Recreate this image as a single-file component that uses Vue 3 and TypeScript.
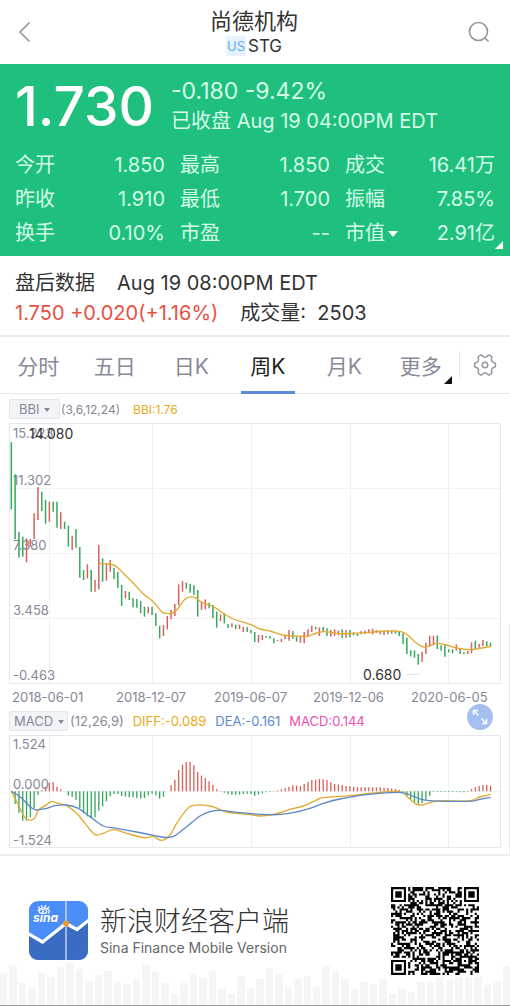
<script setup lang="ts">
import { ref } from 'vue'

interface Stat { label: string; value: string; menu?: boolean }
const stats: Stat[] = [
  { label: '今开', value: '1.850' },
  { label: '最高', value: '1.850' },
  { label: '成交', value: '16.41万' },
  { label: '昨收', value: '1.910' },
  { label: '最低', value: '1.700' },
  { label: '振幅', value: '7.85%' },
  { label: '换手', value: '0.10%' },
  { label: '市盈', value: '--' },
  { label: '市值', value: '2.91亿', menu: true },
]

const tabs = ['分时', '五日', '日K', '周K', '月K', '更多']
const active = ref('周K')

// Weekly ranges: direction, high, low (thirds of a pixel below the chart card's top)
type Candle = [string, number, number]
const weeks = `g142-343 g238-432 g410-488 g425-485 r430-502 r432-455 r355-432 r276-375 g290-348 g315-386
r320-380 g320-350 g320-398 r352-402 g380-402 g392-455 r422-465 g402-458 g456-548 g525-555
r508-550 g525-590 r555-590 r450-583 g490-560 r507-557 r495-530 g518-553 g530-578 g570-633
r588-610 g590-615 g610-637 g612-638 g618-655 g635-665 r635-655 g635-660 g655-693 g692-730
r690-723 r663-703 r645-673 r627-663 r568-630 r558-590 g563-581 g567-593 g571-600 g585-665
r620-645 r613-643 g623-640 g630-670 g650-698 r658-678 g655-685 g687-699 r685-697 g689-702
r689-702 r695-711 g696-711 g705-715 g711-741 r720-743 r720-735 g723-728 g723-731 g730-745
r735-738 r731-741 r721-733 r705-737 g709-731 g725-740 r722-743 r711-745 r703-725 r692-711
g695-703 r697-723 g695-710 g700-723 r705-725 r703-723 r707-721 g703-729 r705-728 g705-727
g712-721 g715-723 r708-718 r707-717 r703-715 r701-718 r705-713 r707-718 r708-720 g707-718
r707-716 g707-716 g710-723 g715-747 g728-777 g766-784 g766-788 g777-809 r770-801 r743-777
r722-755 r722-751 g721-762 g751-767 g751-785 g763-772 g763-775 r748-767 g762-777 g772-778
r768-777 r742-775 g737-763 r747-758 r735-753 g739-753 g743-755`
const candles: Candle[] = weeks.split(/\s+/).map((w) => {
  const [hi, lo] = w.slice(1).split('-').map(Number)
  return [w[0], hi, lo]
})
const macd = [
  0, -38, -65, -88, -88, -78, -50, -10, 4, 14, 26, 28, 14, 6, 0, -13, -17, -26, -50, -66, -75, -78, -78, -58, -45,
  -30, -15, -8, -8, -14, -16, -18, -18, -20, -22, -20, -12, -8, -12, -22, -16, 0, 18, 35, 64, 80, 88, 88, 78, 58,
  47, 40, 30, 20, 6, 1, -4, -9, -10, -10, -10, -8, -7, -8, -13, -10, -6, -3, -1, 1, 3, 6, 9, 13, 18,
  17, 16, 22, 28, 34, 35, 37, 36, 34, 27, 22, 21, 19, 16, 15, 14, 13, 12, 12, 12, 12, 12, 12, 11, 10,
  8, 7, 4, -6, -14, -24, -33, -39, -35, -25, -13, -2, -2, -2, -2, -2, -2, -2, -3, -3, -2, 7, 12, 16, 19, 19, 17,
]
const cx = (i: number) => 34 + i * 11.41

// Smooth curve through a list of points
function curve(s: string): string {
  const p = s.split(' ').map((q) => q.split(',').map(Number))
  let d = `M${p[0]}`
  for (let i = 0; i < p.length - 1; i++) {
    const a = p[Math.max(0, i - 1)], b = p[i], c = p[i + 1], e = p[Math.min(p.length - 1, i + 2)]
    d += `C${b[0] + (c[0] - a[0]) / 6},${b[1] + (c[1] - a[1]) / 6} ${c[0] - (e[0] - b[0]) / 6},${c[1] - (e[1] - b[1]) / 6} ${c}`
  }
  return d
}
const bbi = curve('297,505 325,507 345,512 360,525 400,565 430,597 460,620 485,650 500,655 515,655 530,645 555,613 575,605 590,610 605,622 640,635 670,655 700,672 750,688 780,702 810,708 850,720 880,723 920,724 950,714 975,710 1020,716 1060,715 1110,712 1160,708 1200,709 1220,718 1250,745 1270,756 1290,752 1310,745 1340,750 1370,759 1410,764 1440,760 1473,754')
const diff = curve('34,259 55,300 75,338 92,346 105,338 115,315 135,302 155,290 175,295 200,302 230,325 255,355 285,389 310,385 340,374 380,385 430,398 460,395 485,406 510,390 530,355 560,314 580,301 630,303 680,321 720,326 760,330 780,333 820,328 850,320 870,313 910,303 950,285 970,278 1050,272 1130,263 1200,260 1225,278 1250,298 1270,299 1300,290 1330,287 1405,288 1440,276 1472,268')
const dea = curve('34,259 60,275 85,300 105,314 135,311 165,302 200,300 235,310 270,335 310,363 350,370 410,381 460,391 500,398 525,392 560,365 600,333 630,320 660,316 720,323 780,328 830,329 880,323 930,310 970,295 1020,282 1100,269 1200,262 1240,274 1280,286 1400,289 1440,283 1472,277')

const gridX = [49.5, 152.5, 251.5, 350.5, 448.5]
const priceLabels = [
  { y: 15, t: '15.223' }, { y: 62, t: '11.302' }, { y: 127, t: '7.380' }, { y: 192, t: '3.458' }, { y: 257, t: '-0.463' },
]
const dates = [
  { x: 12, t: '2018-06-01' }, { x: 116, t: '2018-12-07' }, { x: 214, t: '2019-06-07' },
  { x: 313, t: '2019-12-06' }, { x: 411, t: '2020-06-05' },
]

const skyline = [
  32, 40, 22, 18, 32, 28, 38, 42, 36, 24, 30, 34, 23, 21, 26, 40, 33, 22, 11, 22, 31, 27, 34, 16, 11, 29, 17, 26, 37,
  31, 18, 27, 29, 18, 39, 34, 26, 16, 23, 21, 26, 11, 16, 13, 23, 23, 28, 25, 28, 28, 28, 20, 24, 39,
]

// Code matrix: finder squares, alignment square, timing lines and data cells
const N = 41
function cell(x: number, y: number): boolean {
  for (const [fx, fy] of [[0, 0], [N - 7, 0], [0, N - 7]]) {
    const dx = Math.abs(x - fx - 3), dy = Math.abs(y - fy - 3), m = Math.max(dx, dy)
    if (m <= 4) return m !== 4 && m !== 2
  }
  const m = Math.max(Math.abs(x - 34), Math.abs(y - 34))
  if (m <= 2) return m !== 1
  if (x === 6 || y === 6) return (x + y) % 2 === 0
  let h = Math.imul(x * 73 + y * 151 + 17, 2654435761)
  h = Math.imul(h ^ (h >>> 15), 2246822519)
  return ((h ^ (h >>> 13)) & 255) < 132
}
let qr = ''
for (let y = 0; y < N; y++) for (let x = 0; x < N; x++) if (cell(x, y)) qr += `M${x} ${y}h1v1h-1z`
</script>

<template>
  <main class="page">
    <header class="top">
      <button class="icon" aria-label="返回">
        <svg width="14" height="22" viewBox="0 0 14 22"><path d="M11.5 1.5 2 11l9.500 9.500" fill="none" stroke="#9296a0" stroke-width="1.600" /></svg>
      </button>
      <div class="name">
        <h1>尚德机构</h1>
        <p><span class="us">US</span>STG</p>
      </div>
      <button class="icon end" aria-label="搜索">
        <svg width="22" height="22" viewBox="0 0 22 22" fill="none" stroke="#9296a0" stroke-width="1.600"><circle cx="10.500" cy="10.500" r="9" /><path d="m17 17 3.500 3.500" /></svg>
      </button>
    </header>

    <section class="quote">
      <div class="price">
        <strong>1.730</strong>
        <div>
          <p class="chg">-0.180 -9.42%</p>
          <p class="time">已收盘 Aug 19 04:00PM EDT</p>
        </div>
      </div>
      <dl class="stats">
        <div v-for="s in stats" :key="s.label">
          <dt>{{ s.label }}<i v-if="s.menu" class="down"></i></dt>
          <dd>{{ s.value }}</dd>
        </div>
      </dl>
      <i class="corner"></i>
    </section>

    <section class="after">
      <p><span>盘后数据</span><span>Aug 19 08:00PM EDT</span></p>
      <p><span class="up">1.750 +0.020(+1.16%)</span><span>成交量:&nbsp; 2503</span></p>
    </section>

    <nav class="tabs">
      <button v-for="t in tabs" :key="t" :class="{ on: t === active, more: t === '更多' }" @click="active = t">{{ t }}</button>
      <button class="gear" aria-label="设置">
        <svg width="24" height="24" viewBox="0 0 24 24" fill="none" stroke="#9296a0" stroke-width="1.500" stroke-linejoin="round">
          <path d="M7.500 2.200Q8.600 1.600 9.300 2.800Q12 5.800 14.700 2.800Q15.400 1.600 16.500 2.200L18.300 3.300Q19.300 4 18.700 5.200Q17.600 9 21.400 9.700Q22.500 10 22.500 11V13Q22.500 14 21.400 14.300Q17.600 15 18.700 18.800Q19.300 20 18.300 20.700L16.500 21.800Q15.400 22.400 14.700 21.200Q12 18.200 9.300 21.200Q8.600 22.400 7.500 21.800L5.700 20.700Q4.700 20 5.300 18.800Q6.400 15 2.600 14.300Q1.500 14 1.500 13V11Q1.500 10 2.600 9.700Q6.400 9 5.300 5.200Q4.700 4 5.700 3.300Z" />
          <circle cx="12" cy="12" r="2.800" />
        </svg>
      </button>
    </nav>

    <section class="charts">
      <div class="row first">
        <label class="pick bbi"><select aria-label="主图指标"><option>BBI</option></select></label>
        <span>(3,6,12,24)</span>
        <span class="or">BBI:1.76</span>
      </div>
      <svg class="plot" viewBox="0 0 510 284" role="img" aria-label="周K线">
        <g stroke="#f0f1f4" fill="none">
          <path v-for="x in gridX" :key="x" :d="`M${x} 0V260`" />
          <path d="M10 65.500H500M10 130.500H500M10 195.500H500" />
          <path d="M9.500 .5H500.500V260.500H9.500Z" stroke="#e6e8ec" />
        </g>
        <g class="axis">
          <text v-for="l in priceLabels" :key="l.t" x="13" :y="l.y">{{ l.t }}</text>
          <text v-for="d in dates" :key="d.t" :x="d.x" y="279">{{ d.t }}</text>
        </g>
        <g transform="translate(0 -28) scale(.33333)">
          <path v-for="(c, i) in candles" :key="i" :d="`M${cx(i)} ${c[1]}V${c[2]}`" :class="c[0]" stroke-width="4.500" />
          <path :d="bbi" class="line orange" />
        </g>
        <path d="M407 251.500h12" stroke="#e3e4e8" />
        <text x="29" y="16" class="mark">14.080</text>
        <text x="363" y="257" class="mark">0.680</text>
      </svg>

      <div class="row second">
        <label class="pick"><select aria-label="副图指标"><option>MACD</option></select></label>
        <span>(12,26,9)</span>
        <span class="or">DIFF:-0.089</span>
        <span class="bl">DEA:-0.161</span>
        <span class="pk">MACD:0.144</span>
        <button class="expand" aria-label="全屏">
          <svg width="16" height="16" viewBox="0 0 16 16" fill="none" stroke="#fff" stroke-width="1.400"><path d="M1.500 6V1.500H6M1.500 1.500 6.500 6.500M14.500 10V14.500H10M14.500 14.500 9.500 9.500" /></svg>
        </button>
      </div>
      <svg class="plot" viewBox="0 0 510 113" role="img" aria-label="MACD">
        <g stroke="#f0f1f4" fill="none">
          <path v-for="x in gridX" :key="x" :d="`M${x} 0V112`" />
          <path d="M10 56.500H500" />
          <path d="M9.500 .5H500.500V112.500H9.500Z" stroke="#e6e8ec" />
        </g>
        <g class="axis">
          <text x="13" y="14">1.524</text>
          <text x="13" y="54">0.000</text>
          <text x="13" y="110">-1.524</text>
        </g>
        <g transform="translate(0 -30) scale(.33333)">
          <path v-for="(m, i) in macd" :key="i" :d="`M${cx(i)} 259v${-m}`" :class="m > 0 ? 'r' : 'g'" stroke-width="4" />
          <path :d="diff" class="line orange" />
          <path :d="dea" class="line blue" />
        </g>
      </svg>
    </section>

    <footer class="brand">
      <div class="sky"><i v-for="(h, i) in skyline" :key="i" :style="{ height: h + 'px' }"></i></div>
      <svg class="logo" width="59" height="59" viewBox="0 0 59 59">
        <defs><clipPath id="tile"><rect width="59" height="59" rx="9" /></clipPath></defs>
        <g clip-path="url(#tile)">
          <rect width="59" height="59" fill="#4a8df8" />
          <path d="M0 33 13.500 41 37 23 48 29 59 20V59H0Z" fill="#3a6cc4" />
          <path d="M-1 32.500 13.500 41 37 22.500 48 28.500 60 19" fill="none" stroke="#fff" stroke-width="3.200" />
          <path d="M37 0V59" stroke="#c5d3e6" stroke-width="1.500" />
          <circle cx="37" cy="22.500" r="3" fill="#ee9c2b" />
          <text x="4" y="20.500" class="sina">sina</text>
          <g fill="none" stroke="#fff" stroke-linecap="round">
            <ellipse cx="14" cy="10.500" rx="3.800" ry="2" stroke-width="1.200" />
            <path d="M9 9.500Q14 4.500 20 9Q21 10.500 19.500 12M10.500 7 9.500 6M13 6 12.500 4.500M16 6 16.500 4.500M18.500 7.200 20 6" stroke-width="1.200" />
          </g>
          <circle cx="14" cy="10.500" r="1" fill="#fff" />
        </g>
      </svg>
      <div class="words">
        <h2>新浪财经客户端</h2>
        <p>Sina Finance Mobile Version</p>
      </div>
      <svg class="qr" width="88" height="88" viewBox="0 0 41 41" role="img" aria-label="二维码"><path :d="qr" fill="#050505" /></svg>
    </footer>
  </main>
</template>

<style>
body { margin: 0; background: #fff; }
</style>

<style scoped>
.page { display: flex; flex-direction: column; min-height: 100vh; box-sizing: border-box; font-family: Inter, "Noto Sans CJK SC", sans-serif; color: #333; border-bottom: 1px solid #999; }
h1, h2, p, dl, dd { margin: 0; font-weight: 400; }
button, select { font: inherit; color: inherit; border: 0; background: none; padding: 0; }
svg { display: block; }

.top { display: flex; align-items: center; height: 64px; padding: 0 20px 0 18px; }
.icon { width: 24px; display: flex; }
.icon.end { justify-content: flex-end; }
.name { flex: 1; text-align: center; }
h1 { font-size: 22px; line-height: 26px; }
.name p { display: flex; justify-content: center; align-items: center; gap: 2px; font-size: 17px; line-height: 20px; padding-top: 2px; }
.us { background: #e4f3fe; color: #68aeea; font-size: 13px; padding: 0 1px; }

.quote { position: relative; background: #1fc07d; color: #d4fbe9; padding: 4px 15px 6px; }
.price { display: flex; align-items: center; gap: 17px; height: 80px; box-sizing: border-box; padding-bottom: 5px; }
.price strong { font-size: 55px; line-height: 64px; font-weight: 500; color: #fff; }
.chg { font-size: 23px; line-height: 30px; }
.time { font-size: 20px; line-height: 30px; white-space: nowrap; }
.stats { display: grid; grid-template-columns: repeat(3, 1fr); column-gap: 15px; font-size: 20px; line-height: 34px; }
.stats div { display: flex; justify-content: space-between; white-space: nowrap; }
.down { display: inline-block; border: 5px solid transparent; border-top: 6px solid #fff; border-bottom: 0; margin: 0 0 3px 3px; }
.corner { position: absolute; right: 7px; bottom: 7px; border-left: 8px solid transparent; border-bottom: 8px solid #fff; }

.after { padding: 12px 15px 7px; font-size: 20px; line-height: 30px; border-bottom: 2px solid #ececee; }
.after p { display: flex; gap: 22px; white-space: nowrap; }
.up { color: #e8503f; }

.tabs { display: flex; height: 56px; border-bottom: 1px solid #e6e7ea; color: #878a99; font-size: 21px; }
.tabs button { flex: 3; position: relative; }
.tabs .on { color: #222; }
.tabs .on::after { content: ""; position: absolute; left: 11px; right: 11px; bottom: -1px; height: 3px; background: #5d8bd9; }
.tabs .more::after { content: ""; position: absolute; right: 7px; bottom: 9px; border-left: 8px solid transparent; border-bottom: 8px solid #111; }
.tabs .gear { flex: 2; display: flex; align-items: center; justify-content: center; }
.tabs .gear::before { content: ""; position: absolute; left: 0; top: 14px; height: 28px; border-left: 1px solid #e6e7ea; }

.charts { position: relative; padding: 1px 0 6px; border-bottom: 2px solid #ededef; }
.charts::after { content: ""; position: absolute; right: 0; bottom: 0; height: 50%; border-right: 1px solid #ececee; }
.row { display: flex; align-items: center; height: 28px; padding: 0 17px 0 9px; font-size: 13px; color: #858898; white-space: nowrap; gap: 9px; }
.row.first { font-size: 12px; gap: 13px; }
.row > :nth-child(2) { margin-left: -7px; }
.row.first > :nth-child(2) { margin-left: -12px; }
.row .pick { position: relative; flex: none; width: 51px; height: 20px; box-sizing: border-box; background: #f3f4f8; border: 1px solid #e3e5ee; border-radius: 2px; font-size: 13px; }
.row .pick:not(.bbi) { width: 59px; }
.pick select { appearance: none; display: block; width: 100%; height: 100%; padding-left: 4px; }
.pick.bbi select { padding-left: 9px; }
.pick::after { content: ""; position: absolute; right: 3px; top: 8px; border: 3px solid transparent; border-top: 4px solid #858898; border-bottom: 0; pointer-events: none; }
.pick.bbi::after { right: 9px; }
.or { color: #e9a820; }
.bl { color: #5b88cc; }
.pk { color: #ea4fb4; }
.expand { width: 26px; height: 26px; margin: -8px 0 0 auto; border-radius: 50%; background: #a5bff0; display: flex; align-items: center; justify-content: center; }
.plot { width: 100%; height: auto; }
.axis { font-size: 13px; fill: #858898; }
.mark { font-size: 14px; fill: #333; }
.g { stroke: #36a85c; }
.r { stroke: #d8625a; }
.line { fill: none; stroke-width: 4; }
.orange { stroke: #e3a92f; }
.blue { stroke: #5c88c8; }

.brand { position: relative; flex: 1; display: flex; align-items: center; padding: 0 31px 0 29px; min-height: 148px; }
.brand > * { position: relative; }
.brand .sky { position: absolute; inset: auto 0 0; display: flex; align-items: flex-end; gap: 2px; overflow: hidden; }
.sky i { flex: 1; background: #f5f5f6; }
.logo, .qr { flex: none; }
.words { margin-left: 12px; white-space: nowrap; }
h2 { font-size: 27px; line-height: 34px; font-weight: 300; }
.words p { font-size: 14px; line-height: 18px; color: #666; }
.qr { margin-left: auto; }
.sina { font: italic 700 12px Inter, sans-serif; fill: #fff; }
</style>
